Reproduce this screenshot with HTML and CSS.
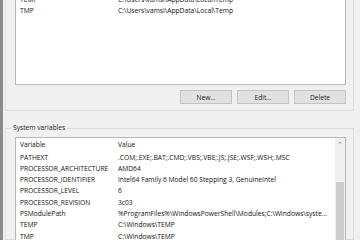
FILE: index.html
```html
<!DOCTYPE html>
<html>
<head>
<meta charset="UTF-8">
<title>Environment Variables</title>
<link rel="stylesheet" href="styles.css">
</head>
<body>
<div class="dialog">
<div class="group user">
<div class="list top">
<div class="row"><span class="name">TEMP</span><span class="val">C:\Users\vamsi\AppData\Local\Temp</span></div>
<div class="row"><span class="name">TMP</span><span class="val">C:\Users\vamsi\AppData\Local\Temp</span></div>
</div>
<div class="btns">
<button>New...</button>
<button>Edit...</button>
<button>Delete</button>
</div>
</div>
<div class="group sys">
<div class="legend">System variables</div>
<div class="list bottom">
<div class="rows">
<div class="row head"><span class="name">Variable</span><span class="val">Value</span></div>
<div class="row"><span class="name">PATHEXT</span><span class="val">.COM;.EXE;.BAT;.CMD;.VBS;.VBE;.JS;.JSE;.WSF;.WSH;.MSC</span></div>
<div class="row"><span class="name">PROCESSOR_ARCHITECTURE</span><span class="val">AMD64</span></div>
<div class="row"><span class="name">PROCESSOR_IDENTIFIER</span><span class="val">Intel64 Family 6 Model 60 Stepping 3, GenuineIntel</span></div>
<div class="row"><span class="name">PROCESSOR_LEVEL</span><span class="val">6</span></div>
<div class="row"><span class="name">PROCESSOR_REVISION</span><span class="val">3c03</span></div>
<div class="row"><span class="name">PSModulePath</span><span class="val">%ProgramFiles%\WindowsPowerShell\Modules;C:\Windows\syste...</span></div>
<div class="row"><span class="name">TEMP</span><span class="val">C:\Windows\TEMP</span></div>
<div class="row"><span class="name">TMP</span><span class="val">C:\Windows\TEMP</span></div>
</div>
<div class="scroll">
<div class="arrow">&#8963;</div>
<div class="thumb"></div>
</div>
</div>
</div>
</div>
</body>
</html>
```
FILE: styles.css
```css
html,body{
margin:0;
padding:0;
}
body{
width:360px;
height:240px;
overflow:hidden;
background:#f0f0f0;
font-family:"Open Sans","Noto Sans",sans-serif;
font-size:6.7px;
color:#111;
}
.dialog{
height:240px;
overflow:hidden;
border-left:3px solid #8a8a8a;
padding:0 6px 0 2px;
}
.group{
border:1px solid #dcdcdc;
}
.group.user{
border-top:none;
height:116px;
}
.group.sys{
margin-top:17px;
border-top:1px solid #dcdcdc;
position:relative;
height:110px;
}
.legend{
position:absolute;
top:-6px;
left:5px;
padding:0 2px;
background:#f0f0f0;
color:#222;
}
.list{
margin-left:9px;
margin-right:7px;
background:#fff;
border:1px solid #b9b9b9;
}
.list.top{
margin-top:-6px;
height:90px;
border-top:none;
}
.row{
display:flex;
height:11.3px;
line-height:11.3px;
white-space:nowrap;
}
.name{
width:98px;
padding-left:4px;
}
.val{
flex:1;
}
.btns{
display:flex;
justify-content:flex-end;
gap:5px;
margin-top:5px;
margin-right:7px;
}
button{
width:52px;
height:14px;
padding:0;
background:#e1e1e1;
border:1px solid #c4c4c4;
font-family:inherit;
font-size:6.7px;
color:#222;
}
.list.bottom{
margin-top:8px;
display:flex;
height:102px;
border-bottom:none;
}
.rows{
flex:1;
}
.row.head{
height:13px;
line-height:13px;
margin-bottom:0.5px;
}
.scroll{
width:10px;
background:#f0f0f0;
display:flex;
flex-direction:column;
}
.arrow{
height:12px;
text-align:center;
color:#777;
font-size:7px;
line-height:14px;
}
.thumb{
margin-top:32px;
margin-left:1px;
margin-right:1px;
flex:1;
background:#cdcdcd;
}
```
